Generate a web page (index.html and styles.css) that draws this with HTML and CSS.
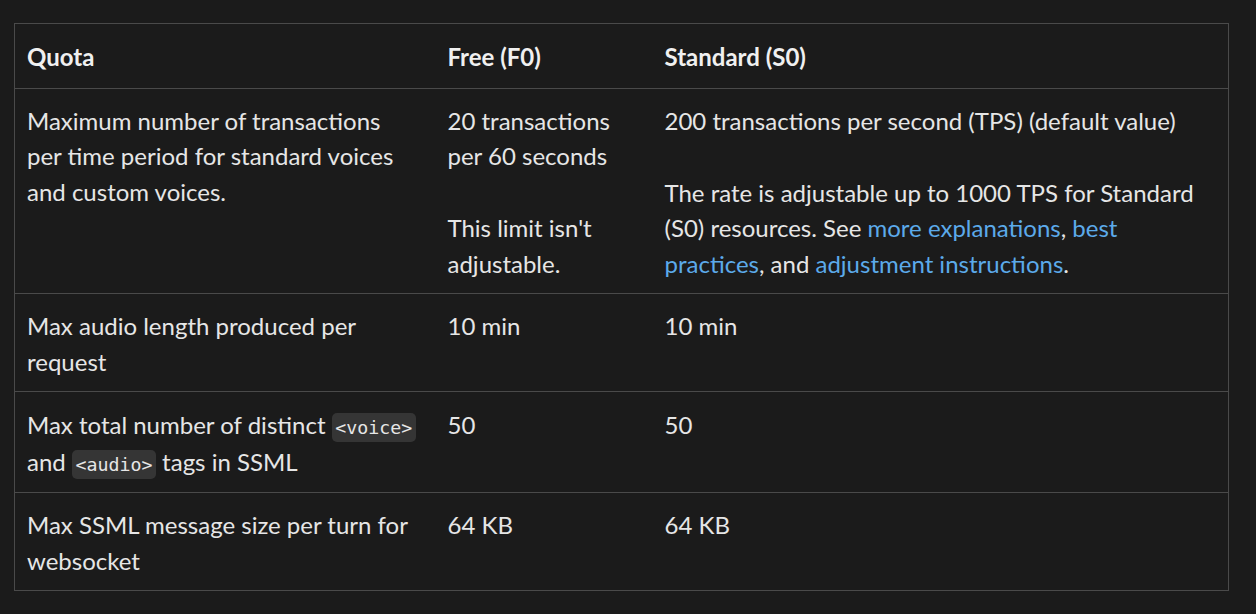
FILE: index.html
```html
<!DOCTYPE html>
<html lang="en">
<head>
<meta charset="utf-8">
<title>Speech quotas</title>
<link rel="stylesheet" href="styles.css">
</head>
<body>
<main class="page">
  <table class="quota-table">
    <colgroup>
      <col class="col-quota">
      <col class="col-free">
      <col class="col-standard">
    </colgroup>
    <thead>
      <tr>
        <th>Quota</th>
        <th>Free (F0)</th>
        <th>Standard (S0)</th>
      </tr>
    </thead>
    <tbody>
      <tr>
        <td>Maximum number of transactions per time period for standard voices and custom voices.</td>
        <td>
          <p>20 transactions per 60 seconds</p>
          <p>This limit isn't adjustable.</p>
        </td>
        <td>
          <p>200 transactions per second (TPS) (default value)</p>
          <p>The rate is adjustable up to 1000 TPS for Standard (S0) resources. See <a href="#">more explanations</a>, <a href="#">best practices</a>, and <a href="#">adjustment instructions</a>.</p>
        </td>
      </tr>
      <tr>
        <td>Max audio length produced per request</td>
        <td>10 min</td>
        <td>10 min</td>
      </tr>
      <tr class="code-row">
        <td>Max total number of distinct <code>&lt;voice&gt;</code> and <code>&lt;audio&gt;</code> tags in SSML</td>
        <td>50</td>
        <td>50</td>
      </tr>
      <tr>
        <td>Max SSML message size per turn for websocket</td>
        <td>64 KB</td>
        <td>64 KB</td>
      </tr>
    </tbody>
  </table>
</main>
</body>
</html>
```
FILE: styles.css
```css
html, body {
  margin: 0;
  background: #1b1b1b;
}

body {
  color: #e6e6e6;
  font-family: "Lato", "Liberation Sans", sans-serif;
  font-size: 24px;
  line-height: 35.5px;
}

.page {
  padding: 23px 0 0 14px;
}

.quota-table {
  table-layout: fixed;
  width: 1214px;
  border-collapse: collapse;
  border: 1px solid #4a4a4a;
}

.col-quota { width: 421px; }
.col-free { width: 217px; }
.col-standard { width: 576px; }

.quota-table th,
.quota-table td {
  text-align: left;
  vertical-align: top;
  padding: 14px 12px 12px;
  border-bottom: 1px solid #4a4a4a;
}

.quota-table th:first-child,
.quota-table td:first-child {
  padding-right: 18px;
}

.quota-table th {
  font-weight: 700;
  color: #f0f0f0;
  padding-top: 15px;
  padding-bottom: 13px;
}

.quota-table p {
  margin: 0;
}

.quota-table p + p {
  margin-top: 36.5px;
}

.quota-table a {
  color: #5caaea;
  text-decoration: none;
}

.quota-table code {
  font-family: "DejaVu Sans Mono", "Liberation Mono", monospace;
  font-size: 18.3px;
  line-height: 1;
  background: #353535;
  border-radius: 5px;
  padding: 4px 3.5px;
}

.code-row td {
  line-height: 37px;
}
```
